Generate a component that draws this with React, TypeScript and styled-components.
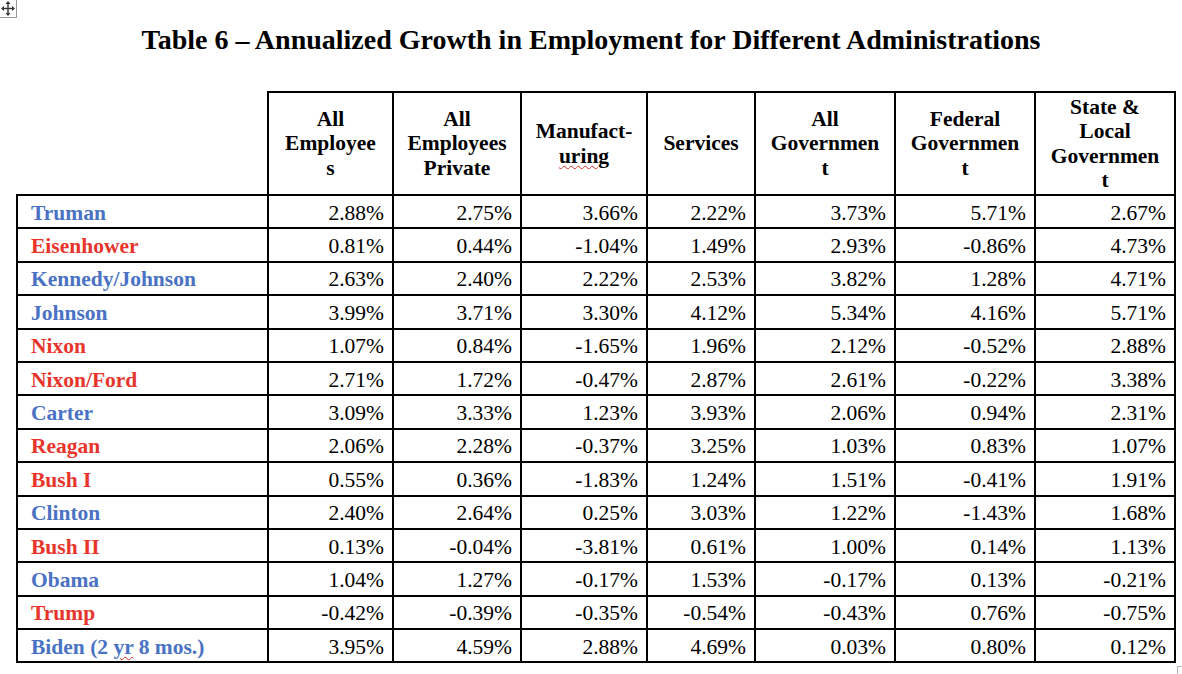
import styled, { createGlobalStyle } from "styled-components";

const GlobalStyle = createGlobalStyle`
  html, body {
    margin: 0;
    padding: 0;
    background: #ffffff;
  }
  body {
    font-family: "Liberation Serif", "Times New Roman", serif;
    color: #000;
  }
`;

const Page = styled.div`
  position: relative;
  width: 1182px;
  height: 674px;
  overflow: hidden;
  background: #fff;
`;

const MoveHandle = styled.div`
  position: absolute;
  left: 0;
  top: 0;
  width: 16px;
  height: 17px;
  border-right: 1px solid #9a9a9a;
  border-bottom: 1px solid #9a9a9a;
  display: flex;
  align-items: center;
  justify-content: center;
`;

const CornerMark = styled.div`
  position: absolute;
  left: 1177px;
  top: 666px;
  width: 6px;
  height: 8px;
  border-top: 1px solid #b5b5b5;
  border-left: 1px solid #b5b5b5;
`;

const Title = styled.h1`
  margin: 0;
  padding-top: 24px;
  height: 66px;
  box-sizing: border-box;
  text-align: center;
  font-size: 28px;
  line-height: 32px;
  font-weight: bold;
  font-family: "Liberation Serif", "Times New Roman", serif;
`;

const TableWrap = styled.div`
  padding-left: 16px;
  padding-top: 25px;
`;

const Table = styled.table`
  border-collapse: collapse;
  table-layout: fixed;
  width: 1160px;
  font-size: 21.5px;
`;

const HeadCell = styled.th<{ $blank?: boolean }>`
  border: 2px solid #000;
  ${(p) => (p.$blank ? "border-top: none; border-left: none;" : "")}
  height: 101px;
  padding: 0 2px;
  text-align: center;
  vertical-align: middle;
  font-weight: bold;
  line-height: 24.5px;
  font-size: 21.5px;
`;

const NameCell = styled.td<{ $party: "d" | "r" }>`
  border: 2px solid #000;
  height: 29.4px;
  padding: 2px 0 0 13px;
  font-weight: bold;
  font-size: 21.5px;
  line-height: 24px;
  white-space: nowrap;
  color: ${(p) => (p.$party === "d" ? "#4a72c4" : "#e8352b")};
`;

const NumCell = styled.td`
  border: 2px solid #000;
  padding: 2px 8px 0 0;
  text-align: right;
  font-size: 21.5px;
  line-height: 24px;
  white-space: nowrap;
`;

const Squiggle = styled.span`
  text-decoration: underline wavy #e0302a;
  text-decoration-thickness: 1px;
  text-underline-offset: 2px;
`;

type Row = { name: React.ReactNode; party: "d" | "r"; values: string[] };

const rows: Row[] = [
  { name: "Truman", party: "d", values: ["2.88%", "2.75%", "3.66%", "2.22%", "3.73%", "5.71%", "2.67%"] },
  { name: "Eisenhower", party: "r", values: ["0.81%", "0.44%", "-1.04%", "1.49%", "2.93%", "-0.86%", "4.73%"] },
  { name: "Kennedy/Johnson", party: "d", values: ["2.63%", "2.40%", "2.22%", "2.53%", "3.82%", "1.28%", "4.71%"] },
  { name: "Johnson", party: "d", values: ["3.99%", "3.71%", "3.30%", "4.12%", "5.34%", "4.16%", "5.71%"] },
  { name: "Nixon", party: "r", values: ["1.07%", "0.84%", "-1.65%", "1.96%", "2.12%", "-0.52%", "2.88%"] },
  { name: "Nixon/Ford", party: "r", values: ["2.71%", "1.72%", "-0.47%", "2.87%", "2.61%", "-0.22%", "3.38%"] },
  { name: "Carter", party: "d", values: ["3.09%", "3.33%", "1.23%", "3.93%", "2.06%", "0.94%", "2.31%"] },
  { name: "Reagan", party: "r", values: ["2.06%", "2.28%", "-0.37%", "3.25%", "1.03%", "0.83%", "1.07%"] },
  { name: "Bush I", party: "r", values: ["0.55%", "0.36%", "-1.83%", "1.24%", "1.51%", "-0.41%", "1.91%"] },
  { name: "Clinton", party: "d", values: ["2.40%", "2.64%", "0.25%", "3.03%", "1.22%", "-1.43%", "1.68%"] },
  { name: "Bush II", party: "r", values: ["0.13%", "-0.04%", "-3.81%", "0.61%", "1.00%", "0.14%", "1.13%"] },
  { name: "Obama", party: "d", values: ["1.04%", "1.27%", "-0.17%", "1.53%", "-0.17%", "0.13%", "-0.21%"] },
  { name: "Trump", party: "r", values: ["-0.42%", "-0.39%", "-0.35%", "-0.54%", "-0.43%", "0.76%", "-0.75%"] },
  {
    name: (
      <>
        Biden (2 <Squiggle>yr</Squiggle> 8 mos.)
      </>
    ),
    party: "d",
    values: ["3.95%", "4.59%", "2.88%", "4.69%", "0.03%", "0.80%", "0.12%"],
  },
];

const widths = [251, 125, 128, 126, 108, 140, 140, 140];

export default function App() {
  return (
    <Page>
      <GlobalStyle />
      <MoveHandle>
        <svg width="14" height="15" viewBox="0 0 14 15" fill="#333">
          <rect x="6.3" y="2" width="1.4" height="11" />
          <rect x="1.5" y="6.8" width="11" height="1.4" />
          <polygon points="7,0 4.5,3 9.5,3" />
          <polygon points="7,15 4.5,12 9.5,12" />
          <polygon points="0,7.5 3,5 3,10" />
          <polygon points="14,7.5 11,5 11,10" />
        </svg>
      </MoveHandle>
      <Title>Table 6 – Annualized Growth in Employment for Different Administrations</Title>
      <TableWrap>
        <Table>
          <colgroup>
            {widths.map((w, i) => (
              <col key={i} style={{ width: w }} />
            ))}
          </colgroup>
          <thead>
            <tr>
              <HeadCell $blank />
              <HeadCell>
                All
                <br />
                Employee
                <br />s
              </HeadCell>
              <HeadCell>
                All
                <br />
                Employees
                <br />
                Private
              </HeadCell>
              <HeadCell>
                Manufact-
                <br />
                <Squiggle>uring</Squiggle>
              </HeadCell>
              <HeadCell>Services</HeadCell>
              <HeadCell>
                All
                <br />
                Governmen
                <br />t
              </HeadCell>
              <HeadCell>
                Federal
                <br />
                Governmen
                <br />t
              </HeadCell>
              <HeadCell>
                State &amp;
                <br />
                Local
                <br />
                Governmen
                <br />t
              </HeadCell>
            </tr>
          </thead>
          <tbody>
            {rows.map((r, i) => (
              <tr key={i}>
                <NameCell $party={r.party}>{r.name}</NameCell>
                {r.values.map((v, j) => (
                  <NumCell key={j}>{v}</NumCell>
                ))}
              </tr>
            ))}
          </tbody>
        </Table>
      </TableWrap>
      <CornerMark />
    </Page>
  );
}
